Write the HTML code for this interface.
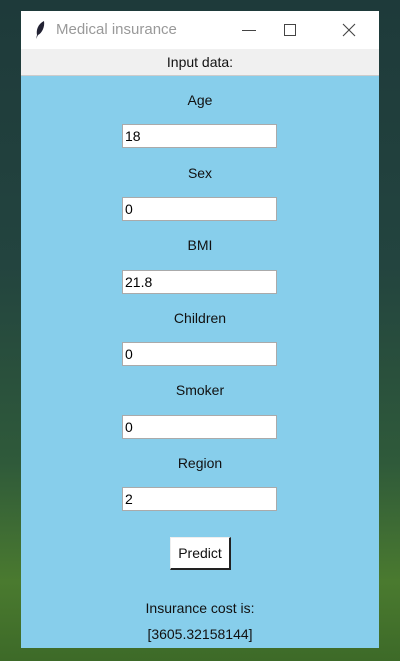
<!DOCTYPE html>
<html><head><style>
body{margin:0;width:400px;height:661px;overflow:hidden;position:relative;font-family:"Liberation Sans",sans-serif;
background:linear-gradient(180deg,#1e3a3a 0%,#23443f 40%,#2f5a3a 70%,#4a7a2f 88%,#3d6a28 100%);}
.win{position:absolute;left:21px;top:11px;width:358px;height:637px;background:#87ceeb;}
.tb{position:absolute;left:0;top:0;width:358px;height:38px;background:#fff;}
.tb .t{position:absolute;left:35px;top:10px;font-size:15px;color:#999;}
.band{position:absolute;left:0;top:38px;width:358px;height:26px;background:#f0f0f0;border-bottom:1px solid #ccc;text-align:center;font-size:14px;line-height:26px;color:#111;}
.lbl{position:absolute;left:0;width:358px;text-align:center;font-size:14px;color:#111;}
.e{position:absolute;left:101px;width:151px;height:22px;background:#fff;border:1px solid #aaa;font-size:14px;line-height:22px;padding-left:2px;box-sizing:content-box;color:#000;}
.btn{position:absolute;left:149px;top:526px;width:58px;height:30px;background:#fff;border-right:2px solid #222;border-bottom:2px solid #222;border-top:1px solid #eee;border-left:1px solid #eee;text-align:center;line-height:30px;font-size:14px;color:#111;}
</style></head><body>
<div class="win">
<div class="tb">
<svg style="position:absolute;left:13px;top:9px" width="12" height="20" viewBox="0 0 12 20"><path d="M10 1 C4 4 2 10 3 15 L2 19 L4 15 C8 13 11 7 10 1Z" fill="#223"/></svg>
<div class="t">Medical insurance</div>
<div style="position:absolute;left:221px;top:19px;width:14px;height:1px;background:#444"></div>
<div style="position:absolute;left:263px;top:13px;width:10px;height:10px;border:1px solid #444"></div>
<svg style="position:absolute;left:321px;top:12px" width="14" height="14"><path d="M1 1L13 13M13 1L1 13" stroke="#444" stroke-width="1.1"/></svg>
</div>
<div class="band">Input data:</div>
<div class="lbl" style="top:81px">Age</div>
<div class="e" style="top:113px">18</div>
<div class="lbl" style="top:154px">Sex</div>
<div class="e" style="top:186px">0</div>
<div class="lbl" style="top:226px">BMI</div>
<div class="e" style="top:259px">21.8</div>
<div class="lbl" style="top:299px">Children</div>
<div class="e" style="top:331px">0</div>
<div class="lbl" style="top:371px">Smoker</div>
<div class="e" style="top:404px">0</div>
<div class="lbl" style="top:444px">Region</div>
<div class="e" style="top:476px">2</div>
<div class="btn">Predict</div>
<div class="lbl" style="top:589px">Insurance cost is:</div>
<div class="lbl" style="top:615px">[3605.32158144]</div>
</div>
</body></html>
